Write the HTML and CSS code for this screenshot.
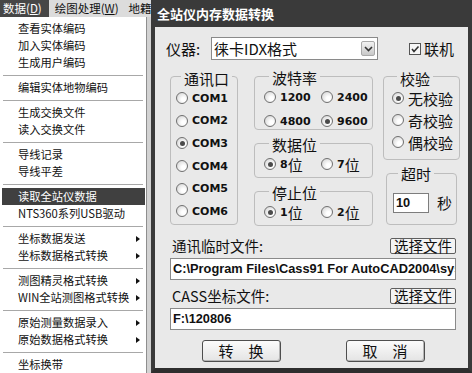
FILE: index.html
```html
<!DOCTYPE html>
<html lang="zh-CN">

<head>
    <meta charset="UTF-8">
    <meta name="viewport" content="width=device-width, initial-scale=1.0">
    <link rel="stylesheet" href="styles.css">
    <title>全站仪内存数据转换</title>
</head>

<body>
    <!-- left: the CASS menu -->
    <div class="app">
        <div class="menubar">
            <span class="mbItem active">数据(<u>D</u>)</span>
            <span class="mbItem">绘图处理(<u>W</u>)</span>
            <span class="mbItem">地籍</span>
        </div>
        <div class="dropdown">
            <div class="item">查看实体编码</div>
            <div class="item">加入实体编码</div>
            <div class="item">生成用户编码</div>
            <div class="sep"></div>
            <div class="item">编辑实体地物编码</div>
            <div class="sep"></div>
            <div class="item">生成交换文件</div>
            <div class="item">读入交换文件</div>
            <div class="sep"></div>
            <div class="item">导线记录</div>
            <div class="item">导线平差</div>
            <div class="sep"></div>
            <div class="item current">读取全站仪数据</div>
            <div class="item">NTS360系列USB驱动</div>
            <div class="sep"></div>
            <div class="item sub">坐标数据发送<i class="arrow"></i></div>
            <div class="item sub">坐标数据格式转换<i class="arrow"></i></div>
            <div class="sep"></div>
            <div class="item sub">测图精灵格式转换<i class="arrow"></i></div>
            <div class="item sub">WIN全站测图格式转换<i class="arrow"></i></div>
            <div class="sep"></div>
            <div class="item sub">原始测量数据录入<i class="arrow"></i></div>
            <div class="item sub">原始数据格式转换<i class="arrow"></i></div>
            <div class="sep"></div>
            <div class="item">坐标换带</div>
        </div>
    </div>

    <!-- right: the dialog -->
    <div class="dialog">
        <div class="titlebar">全站仪内存数据转换</div>
        <div class="dlgBody">
            <div class="deviceRow">
                <span class="lbl">仪器:</span>
                <div class="select">
                    <span>徕卡IDX格式</span>
                    <span class="selBtn">
                        <svg width="9" height="6" viewBox="0 0 9 6">
                            <path d="M1 1 L4.5 4.5 L8 1" fill="none" stroke="#333" stroke-width="1.6" />
                        </svg>
                    </span>
                </div>
                <span class="check">
                    <span class="box">
                        <svg width="10" height="10" viewBox="0 0 10 10">
                            <path d="M2 5 L4 7.5 L8.5 2.5" fill="none" stroke="#333" stroke-width="1.6" />
                        </svg>
                    </span>联机
                </span>
            </div>

            <div class="groups">
                <div class="group port">
                    <span class="legend">通讯口</span>
                    <div class="radio"><span class="dot"></span><b>COM1</b></div>
                    <div class="radio"><span class="dot"></span><b>COM2</b></div>
                    <div class="radio"><span class="dot on"></span><b>COM3</b></div>
                    <div class="radio"><span class="dot"></span><b>COM4</b></div>
                    <div class="radio"><span class="dot"></span><b>COM5</b></div>
                    <div class="radio"><span class="dot"></span><b>COM6</b></div>
                </div>

                <div class="col">
                    <div class="group baud">
                        <span class="legend">波特率</span>
                        <div class="pair">
                            <div class="radio"><span class="dot"></span><b>1200</b></div>
                            <div class="radio"><span class="dot"></span><b>2400</b></div>
                            <div class="radio"><span class="dot"></span><b>4800</b></div>
                            <div class="radio"><span class="dot on"></span><b>9600</b></div>
                        </div>
                    </div>
                    <div class="group bits">
                        <span class="legend">数据位</span>
                        <div class="pair">
                            <div class="radio"><span class="dot on"></span><b>8</b>位</div>
                            <div class="radio"><span class="dot"></span><b>7</b>位</div>
                        </div>
                    </div>
                    <div class="group bits">
                        <span class="legend">停止位</span>
                        <div class="pair">
                            <div class="radio"><span class="dot on"></span><b>1</b>位</div>
                            <div class="radio"><span class="dot"></span><b>2</b>位</div>
                        </div>
                    </div>
                </div>

                <div class="col">
                    <div class="group parity">
                        <span class="legend">校验</span>
                        <div class="radio"><span class="dot on"></span>无校验</div>
                        <div class="radio"><span class="dot"></span>奇校验</div>
                        <div class="radio"><span class="dot"></span>偶校验</div>
                    </div>
                    <div class="group timeout">
                        <span class="legend">超时</span>
                        <div class="timeRow">
                            <span class="smallInput">10</span>
                            <span>秒</span>
                        </div>
                    </div>
                </div>
            </div>

            <div class="fileRow">
                <span>通讯临时文件:</span>
                <span class="pick">选择文件</span>
            </div>
            <div class="textInput">C:\Program Files\Cass91 For AutoCAD2004\system\tongxun.$$$</div>

            <div class="fileRow second">
                <span>CASS坐标文件:</span>
                <span class="pick">选择文件</span>
            </div>
            <div class="textInput">F:\120806</div>

            <div class="btnRow">
                <span class="btn">转　换</span>
                <span class="btn">取　消</span>
            </div>
        </div>
    </div>
</body>

</html>
```

FILE: styles.css
```css
body {
    margin: 0;
    width: 472px;
    height: 373px;
    overflow: hidden;
    display: flex;
    font-family: "Noto Sans CJK SC", "Noto Sans", sans-serif;
    color: #111;
    background-color: #d2d2d2;
}

/* ---------- menu ---------- */

.app {
    width: 151px;
    flex-shrink: 0;
    display: flex;
    flex-direction: column;
}

.menubar {
    height: 17px;
    display: flex;
    align-items: center;
    background-color: #dcdcdc;
    font-size: 11.5px;
    white-space: nowrap;
    overflow: hidden;
}

.mbItem {
    height: 17px;
    line-height: 17px;
    padding: 0 4px 0 3px;
    margin-right: 3px;
}

.mbItem.active {
    background-color: #464646;
    color: white;
    padding-right: 7px;
}

.dropdown {
    flex: 1;
    width: 146px;
    padding-top: 3px;
    background-color: white;
    border-right: 1px solid #8e8e8e;
    font-size: 11.25px;
}

.item {
    height: 17px;
    line-height: 17px;
    padding-left: 18px;
    white-space: nowrap;
}

.item.sub {
    display: flex;
    align-items: center;
    justify-content: space-between;
    padding-right: 6px;
}

.item.current {
    background-color: #404040;
    color: white;
    margin: 0 1px 0 2px;
    padding-left: 16px;
}

.arrow {
    width: 0;
    height: 0;
    border-left: 4px solid #111;
    border-top: 3.5px solid transparent;
    border-bottom: 3.5px solid transparent;
}

.sep {
    height: 1px;
    margin: 4px 3px 3px;
    background-color: #a8a8a8;
}

/* ---------- dialog ---------- */

.dialog {
    flex: 1;
    min-width: 0;
    display: flex;
    flex-direction: column;
    border-left: 4px solid #3a3a3a;
    border-right: 4px solid #3a3a3a;
    border-bottom: 5px solid #2e2e2e;
    background-color: #e9e9e9;
}

.titlebar {
    height: 27px;
    line-height: 28px;
    padding-left: 2px;
    background-color: #3a3a3a;
    color: white;
    font-weight: bold;
    font-size: 13px;
}

.dlgBody {
    flex: 1;
    min-width: 0;
    padding: 0 8px 0 15px;
    font-size: 15px;
}

.deviceRow {
    margin: 10px 0 0 -4px;
    height: 23px;
    display: flex;
    align-items: center;
}

.deviceRow .lbl {
    width: 45px;
}

.select {
    width: 167px;
    height: 23px;
    box-sizing: border-box;
    border: 1px solid #8a8a8a;
    background-color: white;
    display: flex;
    align-items: center;
    justify-content: space-between;
    padding: 0 2px 0 2px;
}

.selBtn {
    width: 14px;
    height: 15px;
    box-sizing: border-box;
    border: 1px solid #a9a9a9;
    border-radius: 2px;
    background: linear-gradient(#f2f2f2, #c9c9c9);
    display: flex;
    align-items: center;
    justify-content: center;
}

.check {
    margin-left: 31px;
    display: flex;
    align-items: center;
}

.check .box {
    width: 12px;
    height: 12px;
    box-sizing: border-box;
    border: 1px solid #555;
    background-color: #f7f7f7;
    margin-right: 3px;
    display: flex;
    align-items: center;
    justify-content: center;
}

/* group boxes */

.groups {
    display: flex;
    margin-top: 16px;
    align-items: flex-start;
}

.col {
    display: flex;
    flex-direction: column;
}

.group {
    box-sizing: border-box;
    border: 1px solid #bdbdbd;
    border-radius: 4px;
}

.legend {
    display: block;
    width: max-content;
    height: 17px;
    line-height: 17px;
    margin: -9px 0 0 5px;
    padding: 0 3px;
    background-color: #e9e9e9;
}

.radio {
    display: flex;
    align-items: center;
    height: 22px;
    white-space: nowrap;
}

.radio b {
    font-family: "DejaVu Sans", sans-serif;
    font-weight: bold;
    font-size: 11px;
}

.dot {
    width: 12px;
    height: 12px;
    box-sizing: border-box;
    border-radius: 50%;
    border: 1px solid #707070;
    background: radial-gradient(circle at 65% 65%, #ffffff 20%, #d4d4d4 90%);
    margin-right: 4px;
    flex-shrink: 0;
    display: flex;
    align-items: center;
    justify-content: center;
}

.dot.on::after {
    content: "";
    width: 5px;
    height: 5px;
    border-radius: 50%;
    background-color: #4a4a4a;
}

.port {
    width: 68px;
    height: 149px;
    padding: 2px 0 0 5px;
}

.port .radio {
    height: 22.6px;
}

.col:nth-child(2) {
    margin-left: 16px;
    width: 119px;
}

.col:nth-child(3) {
    margin-left: 10px;
}

.baud {
    height: 54px;
    padding: 1px 0 0 9px;
}

.pair {
    display: grid;
    grid-template-columns: 57px auto;
    row-gap: 2px;
}

.bits {
    height: 35px;
    margin-top: 13px;
    padding: 1px 0 0 9px;
}

.parity {
    width: 77px;
    height: 84px;
    padding: 2px 0 0 8px;
}

.timeout {
    width: 71px;
    height: 52px;
    margin: 13px 0 0 3px;
    padding: 0 0 0 6px;
}

.timeRow {
    display: flex;
    align-items: center;
    margin-top: 10px;
}

.smallInput {
    width: 36px;
    height: 20px;
    box-sizing: border-box;
    border: 1px solid #7d7d7d;
    background-color: white;
    font-family: "Liberation Sans", sans-serif;
    font-weight: bold;
    font-size: 12.8px;
    line-height: 18px;
    padding-left: 2px;
    margin-right: 8px;
}

/* file rows */

.fileRow {
    display: flex;
    justify-content: space-between;
    align-items: center;
    height: 17px;
    margin: 11px 4px 0 2px;
    font-size: 14.5px;
}

.fileRow.second {
    margin-top: 7px;
}

.pick {
    height: 16px;
    line-height: 14px;
    box-sizing: border-box;
    border: 1px solid #5e5e5e;
    border-radius: 2px;
    background-color: #f4f4f4;
    padding: 0 3px;
    font-size: 14.5px;
}

.textInput {
    height: 22px;
    box-sizing: border-box;
    margin: 4px 4px 0 0;
    border: 1px solid #8a8a8a;
    background-color: white;
    font-family: "Liberation Sans", sans-serif;
    font-weight: bold;
    font-size: 12.8px;
    line-height: 20px;
    padding-left: 2px;
    white-space: nowrap;
    overflow: hidden;
}

.btnRow {
    display: flex;
    justify-content: center;
    gap: 65px;
    margin: 10px 4px 0 0;
}

.btn {
    width: 79px;
    height: 22px;
    box-sizing: border-box;
    border: 1px solid #4e4e4e;
    border-radius: 3px;
    background: linear-gradient(#fbfbfb, #e4e4e4);
    box-shadow: inset -1px -1px 0 #b5b5b5;
    text-align: center;
    line-height: 20px;
    font-size: 15px;
}
```
